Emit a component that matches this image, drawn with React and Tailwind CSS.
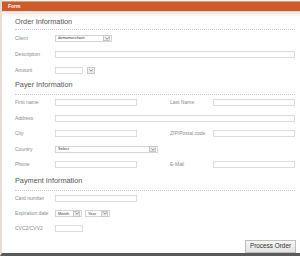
import React from "react";

function Arrow({ className = "" }) {
  return (
    <span className={`flex h-[6px] w-[7px] shrink-0 items-center justify-center border border-[#c8c8c8] bg-[#eeeeee] ${className}`}>
      <svg width="4" height="3" viewBox="0 0 4 3">
        <path d="M0.5 0.5 L2 2.3 L3.5 0.5" fill="none" stroke="#777" strokeWidth="0.8" />
      </svg>
    </span>
  );
}

function Field({ w = "w-[82px]" }) {
  return <div className={`h-[7px] ${w} shrink-0 border border-[#dcdcdc] bg-white`} />;
}

function Select({ w, text }) {
  return (
    <div className={`flex h-[7px] ${w} shrink-0 items-center justify-between border border-[#d4d4d4] bg-white pl-[2px] pr-[1px]`}>
      <span className="text-[4px] leading-none text-[#333]">{text}</span>
      <Arrow />
    </div>
  );
}

function Label({ children, w = "w-[40px]" }) {
  return <span className={`${w} shrink-0 text-[5px] leading-none text-[#8a8a8a]`}>{children}</span>;
}

function Heading({ children, className = "" }) {
  return (
    <div className={`mr-[5px] border-b border-dotted border-[#c9c9c9] ${className}`}>
      <div className="h-[10px] text-[7.3px] leading-[10px] text-[#555555]">{children}</div>
    </div>
  );
}

function Row({ children, h = "h-[16px]" }) {
  return <div className={`flex ${h} items-center`}>{children}</div>;
}

function Half({ label, lw = "w-[40px]" }) {
  return (
    <div className="flex w-[155px] shrink-0 items-center">
      <Label w={lw}>{label}</Label>
      <Field />
    </div>
  );
}

export default function App() {
  return (
    <div
      className="relative h-[256px] w-[300px] overflow-hidden border-b-[3px] border-l-2 border-b-[#5a5a5a] border-l-[#e9dcd4] bg-white"
      style={{ fontFamily: '"Liberation Sans", Arial, sans-serif' }}
    >
      {/* Title bar */}
      <div className="mt-[1px] h-[10px] border-t border-[#e79a73] bg-[#cf5a26] pl-[6px] text-[5px] font-bold leading-[9px] text-white">
        Form
      </div>
      <div className="h-[6px] bg-gradient-to-b from-[#e4e4e4] to-white" />

      <div className="pl-[13px]">
        {/* Order Information */}
        <Heading className="pb-[2px]">Order Information</Heading>
        <Row>
          <Label>Client</Label>
          <Select w="w-[57px]" text="demomerchant" />
        </Row>
        <Row>
          <Label>Description</Label>
          <Field w="w-[240px]" />
        </Row>
        <Row>
          <Label>Amount</Label>
          <Field w="w-[28px]" />
          <Arrow className="ml-[4px] h-[7px] w-[8px]" />
        </Row>

        {/* Payer Information */}
        <Heading className="mt-[2px] pb-[4px]">Payer Information</Heading>
        <Row h="h-[15.5px]">
          <Half label="First name" />
          <Half label="Last Name" lw="w-[43px]" />
        </Row>
        <Row h="h-[15.5px]">
          <Label>Address</Label>
          <Field w="w-[240px]" />
        </Row>
        <Row h="h-[15.5px]">
          <Half label="City" />
          <Half label="ZIP/Postal code" lw="w-[43px]" />
        </Row>
        <Row h="h-[15.5px]">
          <Label>Country</Label>
          <Select w="w-[103px]" text="Select" />
        </Row>
        <Row h="h-[15.5px]">
          <Half label="Phone" />
          <Half label="E-Mail" lw="w-[43px]" />
        </Row>

        {/* Payment Information */}
        <Heading className="mt-[3.5px] pb-[4px]">Payment Information</Heading>
        <Row h="h-[15px]">
          <Label>Card number</Label>
          <Field />
        </Row>
        <Row h="h-[15px]">
          <Label>Expiration date</Label>
          <Select w="w-[27px]" text="Month" />
          <div className="ml-[3px]">
            <Select w="w-[25px]" text="Year" />
          </div>
        </Row>
        <Row h="h-[15px]">
          <Label>CVC2/CVV2</Label>
          <Field w="w-[28px]" />
        </Row>

        <div className="mt-[4px] flex justify-end pr-[4px]">
          <button className="h-[13px] w-[51px] border border-[#bdbdbd] bg-gradient-to-b from-[#f7f7f7] to-[#e2e2e2] text-[6.4px] leading-none text-[#333]">
            Process Order
          </button>
        </div>
      </div>
    </div>
  );
}
